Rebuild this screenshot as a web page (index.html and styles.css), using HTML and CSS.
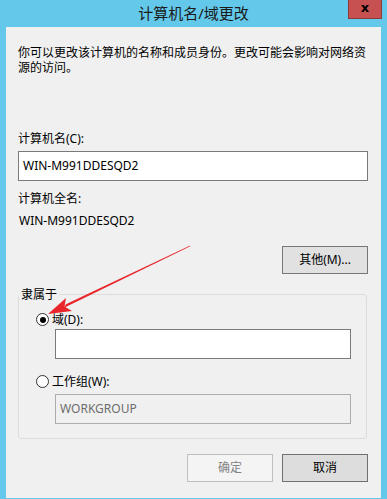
FILE: index.html
```html
<!DOCTYPE html>
<html lang="zh-CN">
<head>
<meta charset="UTF-8">
<title>计算机名/域更改</title>
<link rel="stylesheet" href="styles.css">
</head>
<body>
<div class="window">
    <div class="titlebar">
        计算机名/域更改
        <div class="close-btn">x</div>
    </div>
    <div class="client">
        <p class="intro">你可以更改该计算机的名称和成员身份。更改可能会影响对网络资源的访问。</p>

        <div class="label label-name">计算机名(C):</div>
        <div class="textbox">WIN-M991DDESQD2</div>

        <div class="label label-full">计算机全名:</div>
        <div class="value">WIN-M991DDESQD2</div>

        <div class="btn-row btn-row-more">
            <div class="btn">其他(M)...</div>
        </div>

        <fieldset class="groupbox">
            <legend>隶属于</legend>
            <div class="radio-row radio-domain">
                <span class="radio checked"></span>
                <span>域(D):</span>
            </div>
            <div class="textbox inner-box"></div>
            <div class="radio-row radio-work">
                <span class="radio"></span>
                <span>工作组(W):</span>
            </div>
            <div class="textbox inner-box disabled-box">WORKGROUP</div>
        </fieldset>

        <div class="btn-row btn-row-bottom">
            <div class="btn btn-disabled">确定</div>
            <div class="btn btn-cancel">取消</div>
        </div>
    </div>

    <!-- red annotation arrow -->
    <svg class="arrow" width="387" height="499" viewBox="0 0 387 499">
        <polygon points="190.2,245.5 189.8,246.5 64.1,307.8 65.9,304.2" fill="#e8262b"/>
        <polygon points="48,314 66,298 64.5,306.5 72,311" fill="#e8262b"/>
    </svg>
</div>
</body>
</html>
```

FILE: styles.css
```css
* {
    box-sizing: border-box;
}

body {
    margin: 0;
    font-family: "Segoe UI", "Noto Sans", "Noto Sans CJK SC", sans-serif;
    font-size: 12px;
    color: #000;
}

.window {
    position: relative;
    width: 387px;
    height: 499px;
    background-color: #63c8ea;
    overflow: hidden;
}

.titlebar {
    position: relative;
    height: 27px;
    line-height: 26px;
    text-align: center;
    font-size: 15px;
    color: #1a1a1a;
}

.close-btn {
    position: absolute;
    top: 0;
    right: 5px;
    width: 34px;
    height: 19px;
    background-color: #c75050;
    border: 1px solid #8c3b3b;
    border-top: none;
    color: #000;
    font-family: "DejaVu Sans", sans-serif;
    font-weight: bold;
    font-size: 13px;
    line-height: 15px;
    text-align: center;
}

.client {
    margin: 0 6px;
    height: 471px;
    background-color: #f0f0f0;
    padding: 18px 13px 0 12px;
    line-height: 15px;
}

.intro {
    margin: 0;
}

.label-name {
    margin-top: 56px;
}

.textbox {
    height: 30px;
    margin-top: 5px;
    background-color: #fff;
    border: 1px solid #7a7a7a;
    padding-left: 4px;
    line-height: 28px;
}

.label-full {
    margin-top: 10px;
}

.value {
    margin-top: 7px;
    padding-left: 1px;
}

.btn-row {
    display: flex;
    justify-content: flex-end;
    gap: 9px;
}

.btn-row-more {
    margin-top: 18px;
}

.btn {
    width: 86px;
    height: 28px;
    line-height: 26px;
    text-align: center;
    background-color: #e1e1e1;
    border: 1px solid #777;
}

.btn-disabled {
    background-color: #f4f4f4;
    border-color: #bfbfbf;
    color: #838383;
}

.btn-cancel {
    background-color: #dddddd;
    border-color: #707070;
}

.groupbox {
    margin: 13px 1px 0 0;
    padding: 0 15px 14px 0;
    border: 1px solid #dcdcdc;
    border-radius: 3px;
    min-width: 0;
}

.groupbox legend {
    padding: 0 2px;
    margin-left: 0;
    line-height: 15px;
}

.radio-row {
    display: flex;
    align-items: center;
    gap: 3px;
    padding-left: 17px;
    height: 15px;
}

.radio-domain {
    margin-top: 10px;
}

.radio-work {
    margin-top: 15px;
}

.radio {
    width: 13px;
    height: 13px;
    border: 1px solid #333;
    border-radius: 50%;
    background-color: #fff;
    display: flex;
    align-items: center;
    justify-content: center;
}

.radio.checked::after {
    content: "";
    width: 6px;
    height: 6px;
    border-radius: 50%;
    background-color: #000;
}

.inner-box {
    margin-left: 36px;
    margin-top: 2px;
}

.disabled-box {
    margin-top: 5px;
    background-color: #f0f0f0;
    border-color: #adadad;
    color: #6d6d6d;
}

.btn-row-bottom {
    margin-top: 15px;
}

.arrow {
    position: absolute;
    left: 0;
    top: 0;
    pointer-events: none;
}
```
